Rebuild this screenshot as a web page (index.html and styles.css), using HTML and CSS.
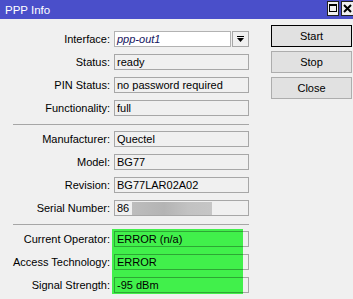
FILE: index.html
```html
<!DOCTYPE html>
<html lang="en">
<head>
  <meta charset="UTF-8">
  <meta name="viewport" content="width=device-width, initial-scale=1.0">
  <title>PPP Info</title>
  <link rel="stylesheet" href="styles.css">
</head>
<body>
  <div class="window">
    <div class="titlebar">
      <span class="title">PPP Info</span>
      <div class="title-btns">
        <span class="tbtn">
          <svg width="10" height="13" viewBox="0 0 10 13"><rect x="1.5" y="2.5" width="7" height="7" fill="none" stroke="#000" stroke-width="1"/><rect x="1" y="2" width="8" height="2" fill="#000"/></svg>
        </span>
        <span class="tbtn">
          <svg width="12" height="13" viewBox="0 0 12 13"><path d="M2 3 L9 10 M9 3 L2 10" stroke="#000" stroke-width="2"/></svg>
        </span>
      </div>
    </div>

    <div class="content">
      <div class="form">
        <div class="group">
          <div class="row">
            <span class="label">Interface:</span>
            <div class="combo">
              <div class="field input">ppp-out1</div>
              <div class="drop">
                <svg width="7" height="7" viewBox="0 0 7 7"><rect x="0" y="0" width="7" height="1" fill="#000"/><polygon points="0,2 7,2 3.5,6" fill="#000"/></svg>
              </div>
            </div>
          </div>
          <div class="row">
            <span class="label">Status:</span>
            <div class="field">ready</div>
          </div>
          <div class="row">
            <span class="label">PIN Status:</span>
            <div class="field">no password required</div>
          </div>
          <div class="row">
            <span class="label">Functionality:</span>
            <div class="field">full</div>
          </div>
        </div>

        <div class="sep"></div>

        <div class="group">
          <div class="row">
            <span class="label">Manufacturer:</span>
            <div class="field">Quectel</div>
          </div>
          <div class="row">
            <span class="label">Model:</span>
            <div class="field">BG77</div>
          </div>
          <div class="row">
            <span class="label">Revision:</span>
            <div class="field">BG77LAR02A02</div>
          </div>
          <div class="row">
            <span class="label">Serial Number:</span>
            <div class="field">86<span class="redacted"></span></div>
          </div>
        </div>

        <div class="sep"></div>

        <div class="group highlight">
          <div class="row">
            <span class="label">Current Operator:</span>
            <div class="field">ERROR (n/a)</div>
          </div>
          <div class="row">
            <span class="label">Access Technology:</span>
            <div class="field">ERROR</div>
          </div>
          <div class="row">
            <span class="label">Signal Strength:</span>
            <div class="field">-95 dBm</div>
          </div>
        </div>
      </div>

      <div class="buttons">
        <div class="btn default">Start</div>
        <div class="btn">Stop</div>
        <div class="btn">Close</div>
      </div>
    </div>
  </div>
</body>
</html>
```

FILE: styles.css
```css
body {
  margin: 0;
  background-color: #f0f0f0;
  font-family: "Liberation Sans", Arial, sans-serif;
  font-size: 11px;
  color: #000;
}

.window {
  width: 353px;
  height: 299px;
  overflow: hidden;
  background-color: #f0f0f0;
}

/* 타이틀 바 */
.titlebar {
  height: 19px;
  background-color: #4a4fca;
  display: flex;
  align-items: center;
  padding-left: 5px;
}
.title {
  color: #fff;
  font-size: 11.5px;
}
.title-btns {
  margin-left: auto;
  display: flex;
  gap: 2px;
  margin-right: -2px;
  margin-top: -2px;
}
.tbtn {
  width: 12px;
  height: 15px;
  box-sizing: border-box;
  border: 1px solid #222;
  background-color: #f0f0f0;
  display: flex;
  align-items: center;
  justify-content: center;
}
.tbtn:last-child {
  width: 14px;
}

.content {
  display: flex;
}

/* 왼쪽 폼 */
.form {
  padding-top: 12px;
  width: 249px;
}
.group {
  display: flex;
  flex-direction: column;
  gap: 7px;
}
.row {
  display: grid;
  grid-template-columns: 110px 135px;
  column-gap: 4px;
  height: 16px;
  align-items: center;
}
.label {
  text-align: right;
  line-height: 16px;
  white-space: nowrap;
}
.field {
  height: 16px;
  box-sizing: border-box;
  border: 1px solid rgba(0, 0, 0, 0.3);
  padding: 0 2px;
  line-height: 14px;
  white-space: nowrap;
  display: flex;
  align-items: center;
}
.combo {
  display: flex;
  gap: 1px;
}
.combo .input {
  width: 118px;
  background-color: #fff;
  font-style: italic;
  color: #141460;
}
.drop {
  width: 17px;
  height: 16px;
  box-sizing: border-box;
  border: 1px solid rgba(0, 0, 0, 0.3);
  display: flex;
  align-items: center;
  justify-content: center;
}
.redacted {
  display: inline-block;
  width: 80px;
  height: 13px;
  margin-left: 3px;
  background: linear-gradient(to right, #bdbdbd, #b4b4b4 40%, #c2c2c2 70%, #c6c6c6);
}

.sep {
  height: 1px;
  background-color: #a6a6a6;
  margin: 8px 0 6px 13px;
}

/* 초록색 강조 영역 */
.highlight {
  position: relative;
}
.highlight::before {
  content: "";
  position: absolute;
  left: 112px;
  width: 131px;
  top: -2px;
  bottom: -1px;
  background-color: #41f04b;
}
.highlight .row {
  position: relative;
}

/* 오른쪽 버튼 */
.buttons {
  margin-left: 22px;
  padding-top: 6px;
  display: flex;
  flex-direction: column;
  gap: 4px;
}
.btn {
  width: 81px;
  height: 22px;
  box-sizing: border-box;
  border: 1px solid #adadad;
  background-color: #e1e1e1;
  display: flex;
  align-items: center;
  justify-content: center;
}
.btn.default {
  border-color: #000;
}
```
